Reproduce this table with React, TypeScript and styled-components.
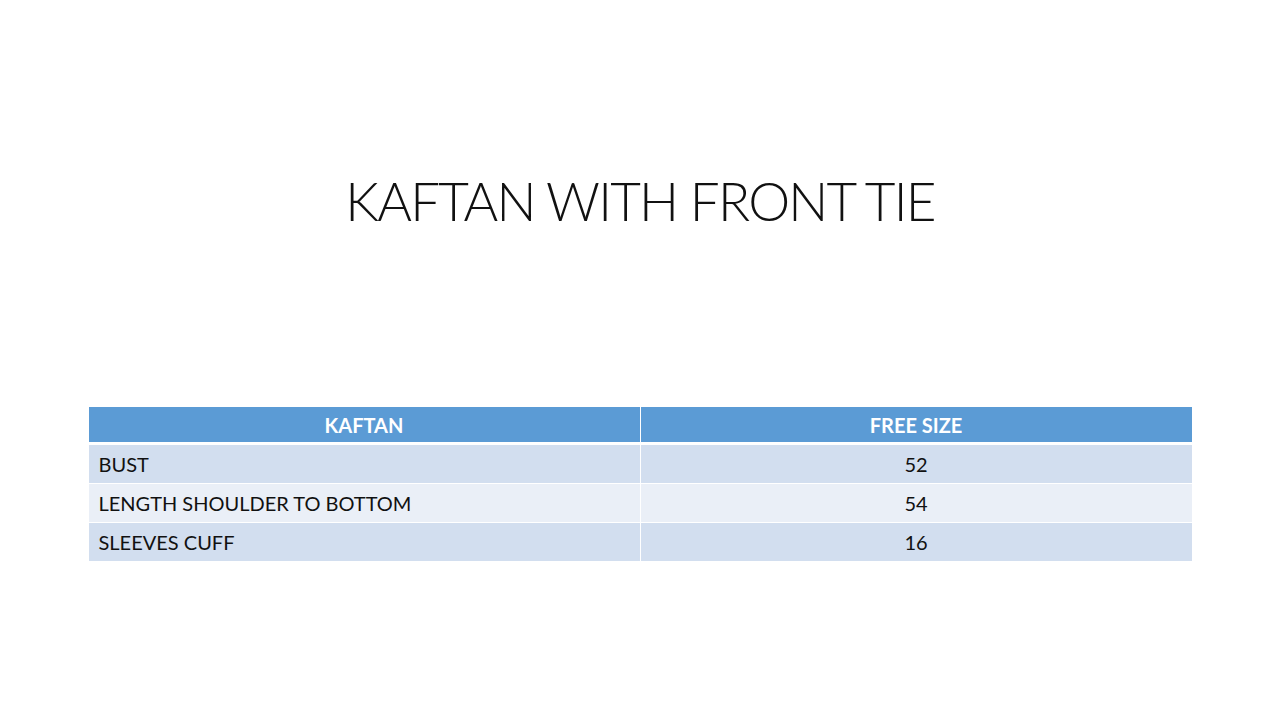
import React from "react";
import styled, { createGlobalStyle } from "styled-components";

const GlobalStyle = createGlobalStyle`
  html, body {
    margin: 0;
    padding: 0;
    background: #ffffff;
  }
`;

const Slide = styled.div`
  width: 1280px;
  height: 720px;
  background: #ffffff;
  display: flex;
  flex-direction: column;
  align-items: center;
  font-family: Lato, "Open Sans", sans-serif;
  color: #000000;
`;

const Title = styled.h1`
  margin: 0;
  padding-top: 165px;
  height: 72px;
  font-size: 53px;
  line-height: 72px;
  font-weight: 300;
  letter-spacing: -1.8px;
  color: #111111;
`;

const Table = styled.div`
  margin-top: 170px;
  width: 1103px;
  display: flex;
  flex-direction: column;
  gap: 1px;
`;

const Row = styled.div<{ $head?: boolean }>`
  display: grid;
  grid-template-columns: 551px 551px;
  column-gap: 1px;
  height: ${(p) => (p.$head ? "35px" : "38px")};
  margin-bottom: ${(p) => (p.$head ? "2px" : "0")};
`;

const Cell = styled.div<{ $bg: string; $center?: boolean; $head?: boolean }>`
  background: ${(p) => p.$bg};
  display: flex;
  align-items: center;
  justify-content: ${(p) => (p.$center ? "center" : "flex-start")};
  padding-left: ${(p) => (p.$center ? "0" : "10px")};
  font-size: 20px;
  font-weight: ${(p) => (p.$head ? 700 : 400)};
  color: ${(p) => (p.$head ? "#ffffff" : "#111111")};
`;

const rows = [
  { label: "BUST", value: "52" },
  { label: "LENGTH SHOULDER TO BOTTOM", value: "54" },
  { label: "SLEEVES CUFF", value: "16" },
];

const App: React.FC = () => {
  return (
    <Slide>
      <GlobalStyle />
      <Title>KAFTAN WITH FRONT TIE</Title>
      <Table>
        <Row $head>
          <Cell $bg="#5b9bd5" $center $head>
            KAFTAN
          </Cell>
          <Cell $bg="#5b9bd5" $center $head>
            FREE SIZE
          </Cell>
        </Row>
        {rows.map((r, i) => {
          const bg = i % 2 === 0 ? "#d2deef" : "#eaeff7";
          return (
            <Row key={r.label}>
              <Cell $bg={bg}>{r.label}</Cell>
              <Cell $bg={bg} $center>
                {r.value}
              </Cell>
            </Row>
          );
        })}
      </Table>
    </Slide>
  );
};

export default App;
